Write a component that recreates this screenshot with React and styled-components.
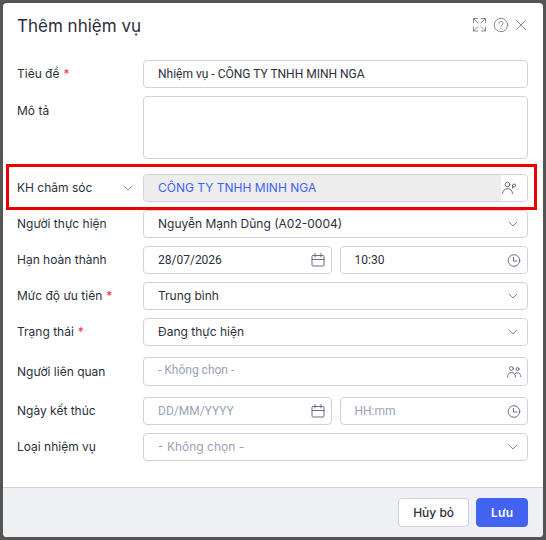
import React, { useState } from 'react'
import styled, { createGlobalStyle } from 'styled-components'

const GlobalStyle = createGlobalStyle`
  * {
    box-sizing: border-box;
  }

  body {
    margin: 0;
    background: #555555;
    color: #2b303a;
    font-family: Inter, 'Noto Sans', sans-serif;
    font-size: 12px;
    line-height: 16px;
  }

  button, input, select, textarea {
    margin: 0;
    color: inherit;
    font: inherit;
  }
`

const Overlay = styled.div`
  display: flex;
  min-height: 100vh;
  padding: 3px;
`

const Dialog = styled.form`
  display: flex;
  flex-direction: column;
  flex: 1;
  min-width: 0;
  border-radius: 4px;
  background: #ffffff;
  overflow: hidden;
`

const Header = styled.header`
  display: flex;
  align-items: center;
  justify-content: space-between;
  padding: 10px 16px 10px 14px;
`

const Title = styled.h1`
  margin: 0;
  font-size: 17px;
  font-weight: 400;
  line-height: 26px;
`

const Tools = styled.div`
  display: flex;
  align-items: center;
  gap: 6px;
  margin-top: -2px;
`

const IconButton = styled.button`
  display: flex;
  padding: 0;
  border: 0;
  background: none;
  color: #85899e;
  cursor: pointer;
`

const Body = styled.div`
  display: flex;
  flex-direction: column;
  flex: 1;
  gap: 8px;
  padding: 11px 15px 24px 14px;
`

const Row = styled.div`
  position: relative;
  display: grid;
  grid-template-columns: 126px minmax(0, 1fr);
  align-items: ${props => (props.$top ? 'start' : 'center')};
  margin-top: ${props => props.$space || 0}px;
`

const Highlight = styled.div`
  position: absolute;
  inset: -10px -9px -8px -11px;
  border: 3px solid #ee0000;
  pointer-events: none;
`

const Label = styled.label`
  padding-top: ${props => (props.$top ? 7 : 0)}px;
`

const LabelGroup = styled.div`
  display: flex;
  align-items: center;
  justify-content: space-between;
  padding-right: 9px;
`

const Required = styled.span`
  margin-left: 4px;
  color: #f5333f;
`

const Pair = styled.div`
  display: grid;
  grid-template-columns: 1fr 1fr;
  gap: 8px;
`

const Box = styled.div`
  display: flex;
  align-items: center;
  height: ${props => (props.$tall ? 29 : 28)}px;
  border: 1px solid #cfd2dc;
  border-radius: 4px;
  background: #ffffff;
  overflow: hidden;
`

const Input = styled.input`
  flex: 1;
  align-self: stretch;
  min-width: 0;
  padding: 0 0 ${props => (props.$raised ? 4 : 0)}px 14px;
  border: 0;
  outline: 0;
  background: none;
  font-family: Roboto, 'Noto Sans', sans-serif;

  &::placeholder {
    color: #9aa2b8;
    opacity: 1;
  }
`

const CustomerInput = styled(Input)`
  background: #ededed;
  color: #4262f0;
  font-family: Inter, 'Noto Sans', sans-serif;
`

const BoxButton = styled(IconButton)`
  padding: 0 5px;
  color: #666d88;
`

const CustomerButton = styled(BoxButton)`
  padding: 0 10px 0 0;
`

const TextArea = styled.textarea`
  display: block;
  width: 100%;
  height: 63px;
  padding: 6px 14px;
  border: 1px solid #cfd2dc;
  border-radius: 4px;
  outline: 0;
  resize: none;
`

const SelectBox = styled(Box)`
  display: grid;
  align-items: center;

  > * {
    grid-area: 1 / 1;
  }

  > svg {
    justify-self: end;
    margin-right: 8px;
    color: #858a9b;
    pointer-events: none;
  }
`

const Select = styled.select`
  width: 100%;
  height: 26px;
  padding: 0 30px 0 14px;
  border: 0;
  outline: 0;
  appearance: none;
  background: none;
  color: ${props => (props.$empty ? '#9aa2b8' : 'inherit')};
`

const Footer = styled.footer`
  display: flex;
  justify-content: flex-end;
  gap: 7px;
  padding: 10px 15px;
  border-top: 1px solid #cfd2dc;
  background: #eff0f3;
`

const Button = styled.button`
  height: 29px;
  padding: 0 14px;
  border: 1px solid ${props => (props.$primary ? '#4262f0' : '#cfd2dc')};
  border-radius: 4px;
  background: ${props => (props.$primary ? '#4262f0' : '#ffffff')};
  color: ${props => (props.$primary ? '#ffffff' : 'inherit')};
  font-weight: ${props => (props.$primary ? 600 : 500)};
  cursor: pointer;
`

const Icon = ({ width = 16, height = 16, children }) => (
  <svg
    width={width}
    height={height}
    viewBox={`0 0 ${width} ${height}`}
    fill="none"
    stroke="currentColor"
    strokeLinecap="round"
    strokeLinejoin="round"
    aria-hidden="true"
  >
    {children}
  </svg>
)

const ExpandIcon = () => (
  <Icon width={15}>
    <path d="M1.5 5.5v-4h4M1.5 1.5l4.500 4.500M9.500 1.500h4v4M13.500 1.500L9 6M1.500 10v4h4M1.500 14L6 9.500M9.500 14h4v-4M13.500 14L9 9.500" />
  </Icon>
)

const HelpIcon = () => (
  <Icon>
    <circle cx="8" cy="8" r="6.7" />
    <path d="M6 6.3a2 2 0 1 1 3 1.7c-.7.4-1 .8-1 1.6M8 11.500v.2" />
  </Icon>
)

const CloseIcon = () => (
  <Icon width={12}>
    <path d="M1.500 3.500l9 9M10.500 3.500l-9 9" />
  </Icon>
)

const ChevronIcon = () => (
  <Icon width={12} height={8}>
    <path d="M2 2l4 4 4-4" />
  </Icon>
)

const CalendarIcon = () => (
  <Icon>
    <rect x="2" y="3.500" width="12" height="10.500" rx="1" />
    <path d="M2 7.500h12M5 1.500v3.500M11 1.500v3.500" />
  </Icon>
)

const ClockIcon = () => (
  <Icon>
    <circle cx="8" cy="8.500" r="5.800" />
    <path d="M7.500 5.500v3.500h3.500" />
  </Icon>
)

const PersonIcon = () => (
  <Icon>
    <circle cx="6.500" cy="4.500" r="2.300" />
    <path d="M1.500 13.500c.2-3 2.100-4.800 5-4.800s4.800 1.800 5 4.800" />
    <circle cx="13" cy="5.500" r="1.500" />
    <path d="M11.500 5.500v2.500" />
  </Icon>
)

const PeopleIcon = () => (
  <Icon>
    <circle cx="5.500" cy="4.500" r="1.900" />
    <circle cx="11.500" cy="5" r="1.500" />
    <path d="M1.500 13c.2-2.800 1.700-4.500 4-4.500S9.300 10.200 9.500 13M9.500 9.500c2.600-1.800 5-.3 5.300 3" />
  </Icon>
)

const SelectField = ({ id, options, empty }) => (
  <SelectBox>
    <Select id={id} defaultValue={options[0]} $empty={empty}>
      {options.map(option => (
        <option key={option}>{option}</option>
      ))}
    </Select>
    <ChevronIcon />
  </SelectBox>
)

const DateTimeField = ({ id, date, time }) => (
  <Pair>
    <Box>
      <Input id={id} defaultValue={date} placeholder="DD/MM/YYYY" />
      <BoxButton type="button" aria-label="Chọn ngày">
        <CalendarIcon />
      </BoxButton>
    </Box>
    <Box>
      <Input aria-label="Giờ" defaultValue={time} placeholder="HH:mm" />
      <BoxButton type="button" aria-label="Chọn giờ">
        <ClockIcon />
      </BoxButton>
    </Box>
  </Pair>
)

const App = () => {
  const [title, setTitle] = useState('Nhiệm vụ - CÔNG TY TNHH MINH NGA')

  return (
    <Overlay>
      <GlobalStyle />
      <Dialog role="dialog" aria-labelledby="dialog-title" onSubmit={e => e.preventDefault()}>
        <Header>
          <Title id="dialog-title">Thêm nhiệm vụ</Title>
          <Tools>
            <IconButton type="button" aria-label="Phóng to">
              <ExpandIcon />
            </IconButton>
            <IconButton type="button" aria-label="Trợ giúp">
              <HelpIcon />
            </IconButton>
            <IconButton type="button" aria-label="Đóng">
              <CloseIcon />
            </IconButton>
          </Tools>
        </Header>

        <Body>
          <Row>
            <Label htmlFor="title">
              Tiêu đề<Required>*</Required>
            </Label>
            <Box>
              <Input id="title" value={title} onChange={e => setTitle(e.target.value)} />
            </Box>
          </Row>
          <Row $top>
            <Label htmlFor="description" $top>
              Mô tả
            </Label>
            <TextArea id="description" />
          </Row>
          <Row $space={7}>
            <LabelGroup>
              <Label htmlFor="customer">KH chăm sóc</Label>
              <IconButton type="button" aria-label="Loại khách hàng">
                <ChevronIcon />
              </IconButton>
            </LabelGroup>
            <Box>
              <CustomerInput id="customer" defaultValue="CÔNG TY TNHH MINH NGA" readOnly />
              <CustomerButton type="button" aria-label="Chọn khách hàng">
                <PersonIcon />
              </CustomerButton>
            </Box>
            <Highlight />
          </Row>
          <Row>
            <Label htmlFor="assignee">Người thực hiện</Label>
            <SelectField id="assignee" options={['Nguyễn Mạnh Dũng (A02-0004)']} />
          </Row>
          <Row>
            <Label htmlFor="deadline">Hạn hoàn thành</Label>
            <DateTimeField id="deadline" date="28/07/2026" time="10:30" />
          </Row>
          <Row>
            <Label htmlFor="priority">
              Mức độ ưu tiên<Required>*</Required>
            </Label>
            <SelectField id="priority" options={['Trung bình']} />
          </Row>
          <Row>
            <Label htmlFor="status">
              Trạng thái<Required>*</Required>
            </Label>
            <SelectField id="status" options={['Đang thực hiện']} />
          </Row>
          <Row $space={3}>
            <Label htmlFor="related">Người liên quan</Label>
            <Box $tall>
              <Input id="related" placeholder="- Không chọn -" $raised />
              <BoxButton type="button" aria-label="Chọn người liên quan">
                <PeopleIcon />
              </BoxButton>
            </Box>
          </Row>
          <Row $space={3}>
            <Label htmlFor="finished">Ngày kết thúc</Label>
            <DateTimeField id="finished" />
          </Row>
          <Row>
            <Label htmlFor="kind">Loại nhiệm vụ</Label>
            <SelectField id="kind" options={['- Không chọn -']} empty />
          </Row>
        </Body>

        <Footer>
          <Button type="button">Hủy bỏ</Button>
          <Button type="submit" $primary>
            Lưu
          </Button>
        </Footer>
      </Dialog>
    </Overlay>
  )
}

export default App
